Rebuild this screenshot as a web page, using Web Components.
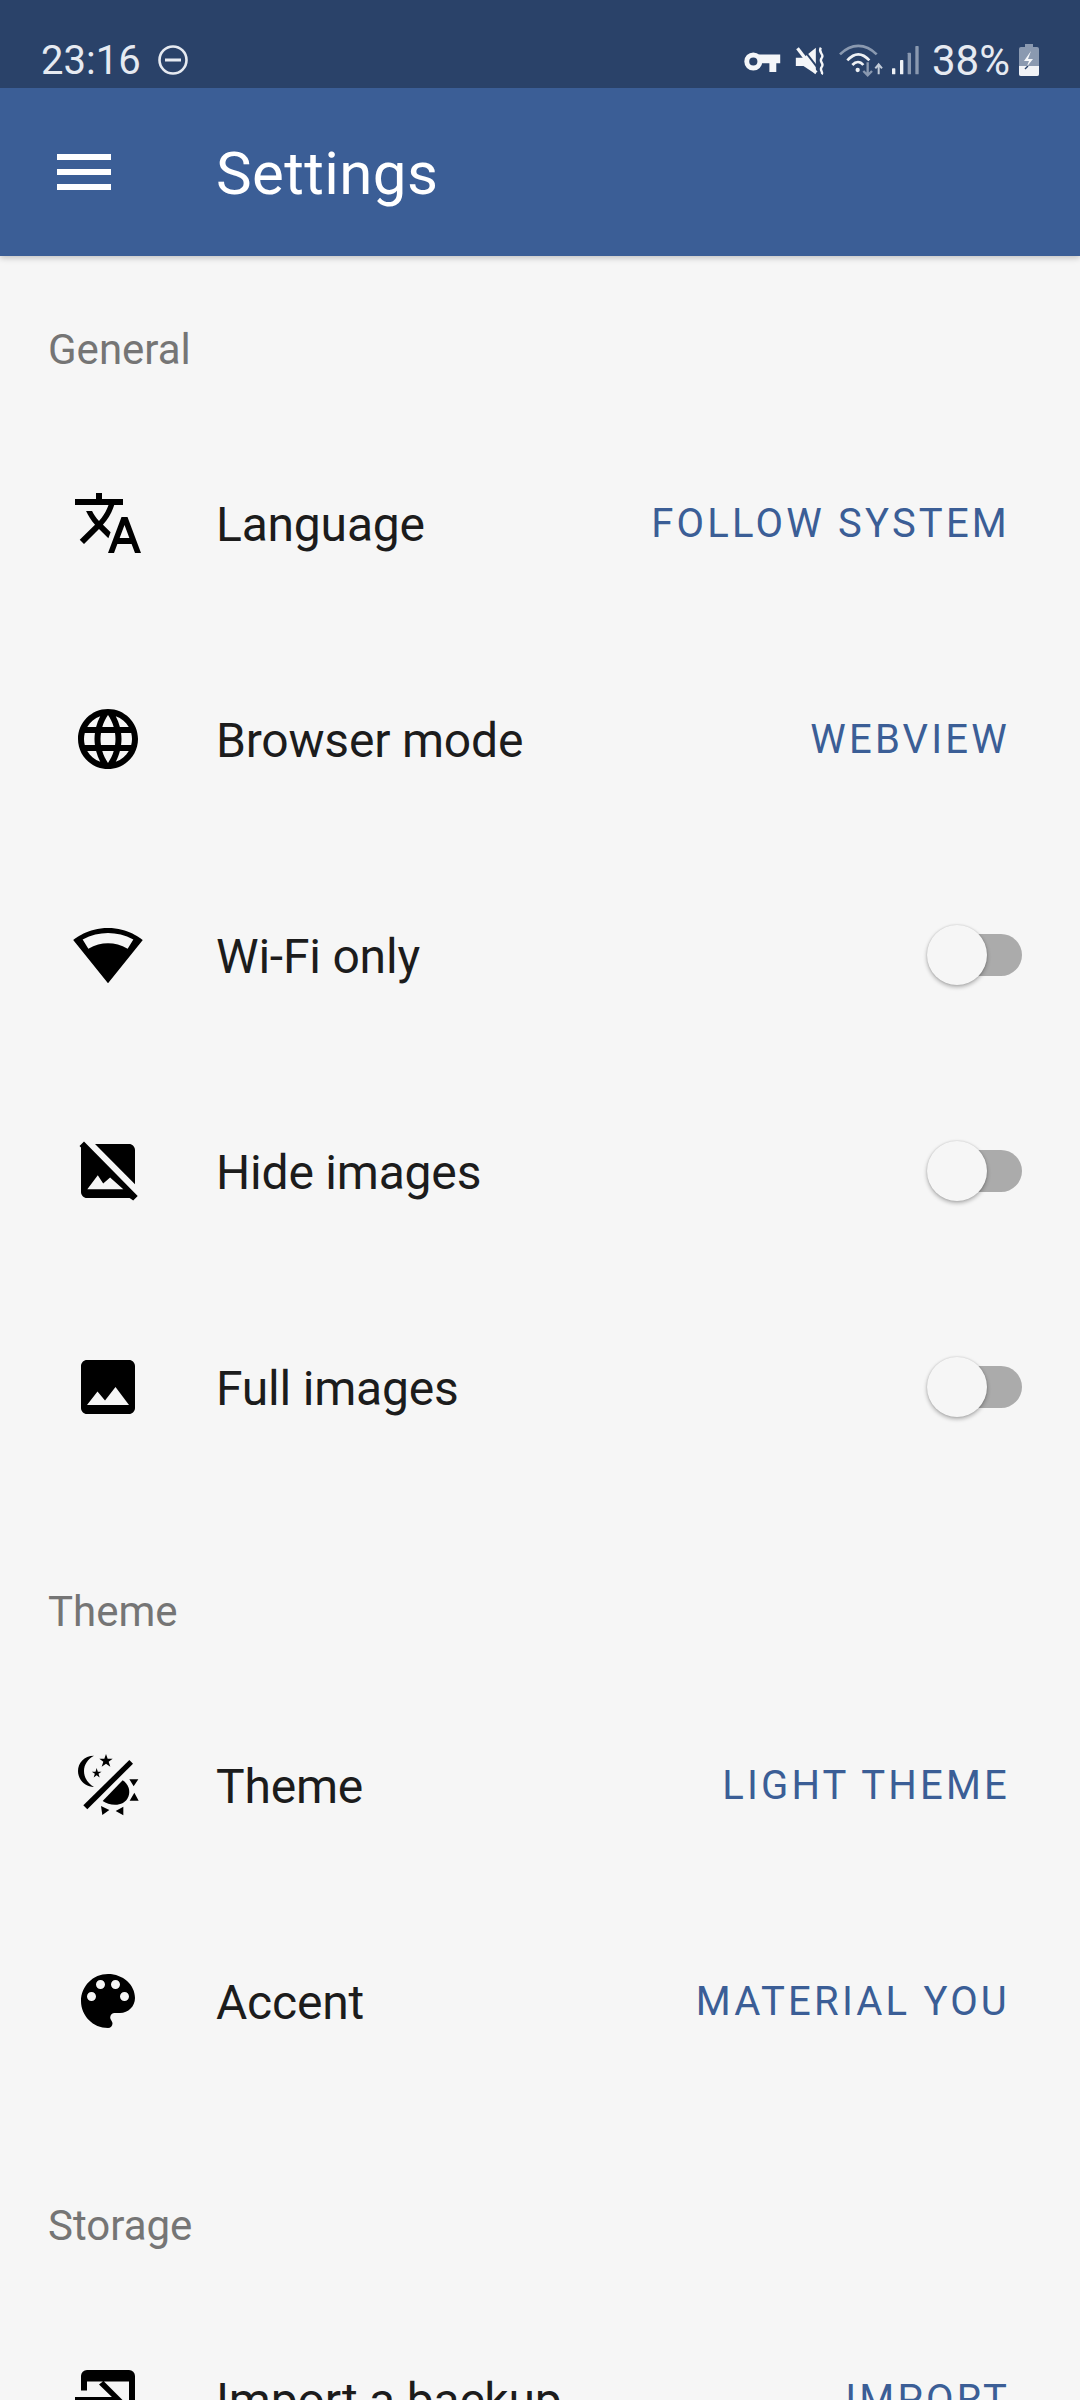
<!DOCTYPE html>
<html>
<head>
<meta charset="utf-8">
<title>Settings</title>
<style>
html, body { margin: 0; height: 2400px; overflow: hidden; background: #f6f6f6; }
body { font-family: Roboto, "Noto Sans", sans-serif; }
svg { display: block; }
</style>
</head>
<body>
<settings-page>
  <status-bar slot="top"></status-bar>
  <app-bar slot="top">Settings</app-bar>

  <settings-section heading="General">
    <settings-row>
      <svg slot="icon" viewBox="0 0 24 24" width="72" height="72"><path d="M12.87 15.07l-2.54-2.51.03-.03c1.74-1.94 2.98-4.17 3.71-6.53H17V4h-7V2H8v2H1v2h11.17C11.5 7.92 10.44 9.75 9 11.35 8.07 10.32 7.3 9.19 6.69 8h-2c.73 1.63 1.73 3.17 2.98 4.56l-5.09 5.02L4 19l5-5 3.11 3.11.76-2.04zM18.5 10h-2L12 22h2l1.12-3h4.75L21 22h2l-4.5-12zm-2.62 7l1.62-4.33L19.12 17h-3.24z"/></svg>
      Language
      <span slot="value">FOLLOW SYSTEM</span>
    </settings-row>
    <settings-row>
      <svg slot="icon" viewBox="0 0 24 24" width="72" height="72"><path d="M11.99 2C6.47 2 2 6.48 2 12s4.47 10 9.99 10C17.52 22 22 17.52 22 12S17.52 2 11.99 2zm6.93 6h-2.95c-.32-1.25-.78-2.45-1.38-3.56 1.84.63 3.37 1.91 4.33 3.56zM12 4.04c.83 1.2 1.48 2.53 1.91 3.96h-3.82c.43-1.43 1.08-2.76 1.91-3.96zM4.26 14C4.1 13.36 4 12.69 4 12s.1-1.36.26-2h3.38c-.08.66-.14 1.32-.14 2 0 .68.06 1.34.14 2H4.26zm.82 2h2.95c.32 1.25.78 2.45 1.38 3.56-1.84-.63-3.37-1.9-4.33-3.56zm2.95-8H5.08c.96-1.66 2.49-2.93 4.33-3.56C8.81 5.55 8.35 6.75 8.03 8zM12 19.96c-.83-1.2-1.48-2.53-1.91-3.96h3.82c-.43 1.43-1.08 2.76-1.91 3.96zM14.34 14H9.66c-.09-.66-.16-1.32-.16-2 0-.68.07-1.35.16-2h4.68c.09.65.16 1.32.16 2 0 .68-.07 1.34-.16 2zm.25 5.56c.6-1.11 1.06-2.31 1.38-3.56h2.95c-.96 1.65-2.49 2.93-4.33 3.56zM16.36 14c.08-.66.14-1.32.14-2 0-.68-.06-1.34-.14-2h3.38c.16.64.26 1.31.26 2s-.1 1.36-.26 2h-3.38z"/></svg>
      Browser mode
      <span slot="value">WEBVIEW</span>
    </settings-row>
    <settings-row>
      <svg slot="icon" viewBox="0 0 24 24" width="72" height="72"><path fill-rule="evenodd" d="M12 21.4L23.6 7C23.15 6.66 18.7 3 12 3S.85 6.66.4 7zM3.55 6.8Q12 2.6 20.45 6.8L18.55 9.9Q12 6.3 5.45 9.9z"/></svg>
      Wi-Fi only
      <toggle-switch slot="value"></toggle-switch>
    </settings-row>
    <settings-row>
      <svg slot="icon" viewBox="0 0 24 24" width="72" height="72"><path d="M7.67 3H19c1.1 0 2 .9 2 2v11.4zM4 2.2l17.9 18.1-1.5 1.5-1.2-.8H5c-1.1 0-2-.9-2-2V4.2l-.5-.5zM5.1 18.1h12L12.7 14.2l-2.3 2-1.8-2.8z"/></svg>
      Hide images
      <toggle-switch slot="value"></toggle-switch>
    </settings-row>
    <settings-row>
      <svg slot="icon" viewBox="0 0 24 24" width="72" height="72"><path d="M21 19V5c0-1.1-.9-2-2-2H5c-1.1 0-2 .9-2 2v14c0 1.1.9 2 2 2h14c1.1 0 2-.9 2-2zM8.5 13.5l2.5 3.01L14.5 12l4.5 6H5l3.5-4.5z"/></svg>
      Full images
      <toggle-switch slot="value"></toggle-switch>
    </settings-row>
  </settings-section>

  <settings-section heading="Theme">
    <settings-row>
      <svg slot="icon" viewBox="6 -6 216 216" width="72" height="72">
        <path d="M72 14C42 14 24 36 24 60C24 86 46 108 72 108C54 98 42 80 42 60C42 40 54 24 72 14z"/>
        <path d="M108 9l5 14h15l-12 9 5 15-13-9-13 9 5-15-12-9h15z"/>
        <path d="M80 51l3.500 11h11l-9 6.500 3.500 11-9-6.500-9 6.500 3.500-11-9-6.500h11z"/>
        <path d="M178 27l11 11L52 175 40 163z"/>
        <path d="M158 88C176 100 182 120 175 137C168 154 152 161 135 161C121 161 108 157 98 150z"/>
        <path d="M178 85h27l-14 21zM193 125l13 24h-27zM93 165l25 12-21 15zM160 167v26l-23-13z"/>
      </svg>
      Theme
      <span slot="value">LIGHT THEME</span>
    </settings-row>
    <settings-row>
      <svg slot="icon" viewBox="0 0 24 24" width="72" height="72"><path d="M12 3c-4.97 0-9 4.03-9 9s4.03 9 9 9c.83 0 1.5-.67 1.5-1.5 0-.39-.15-.74-.39-1.01-.23-.26-.38-.61-.38-.99 0-.83.67-1.5 1.5-1.5H16c2.76 0 5-2.24 5-5 0-4.42-4.03-8-9-8zm-5.500 9c-.83 0-1.500-.67-1.500-1.500S5.670 9 6.500 9 8 9.670 8 10.500 7.330 12 6.500 12zm3-4C8.670 8 8 7.330 8 6.500S8.670 5 9.500 5s1.500.67 1.500 1.500S10.330 8 9.500 8zm5 0c-.83 0-1.500-.67-1.500-1.500S13.670 5 14.500 5s1.500.67 1.500 1.500S15.330 8 14.500 8zm3 4c-.83 0-1.500-.67-1.500-1.500S16.670 9 17.500 9s1.500.67 1.500 1.500-.67 1.500-1.500 1.500z"/></svg>
      Accent
      <span slot="value">MATERIAL YOU</span>
    </settings-row>
  </settings-section>

  <settings-section heading="Storage">
    <settings-row>
      <svg slot="icon" viewBox="0 0 24 24" width="72" height="72"><path d="M3 9.200V4.330a2 2 0 0 1 2-2h14a2 2 0 0 1 2 2V24h-2V6.200H5v3zM1 11.300h12.300L9 7.200l1.500-1.200 6.500 6.500-5 5H1z"/></svg>
      Import a backup
      <span slot="value">IMPORT</span>
    </settings-row>
  </settings-section>
</settings-page>

<script>
class SettingsPage extends HTMLElement {
    constructor() {
        super();
        this.attachShadow({mode: 'open'}).innerHTML = `
            <style>
            :host { display: block; width: 1080px; height: 2400px; overflow: hidden; background: #f6f6f6; }
            header { position: relative; z-index: 1; box-shadow: 0 2px 6px rgba(0, 0, 0, .22); }
            </style>
            <header><slot name="top"></slot></header>
            <slot></slot>
        `;
    }
}

class StatusBar extends HTMLElement {
    constructor() {
        super();
        this.attachShadow({mode: 'open'}).innerHTML = `
            <style>
            :host { display: flex; align-items: center; height: 88px; box-sizing: border-box; padding: 32px 41px 0 41px;
                background: #2a4269; color: #e6eaf1; font-size: 40px; }
            svg { display: block; flex: none; }
            .left, .right { display: flex; align-items: center; }
            .right { margin-left: auto; }
            .dnd { margin-left: 17px; }
            .pct { margin-left: 11px; margin-right: 9px; font-size: 42px; }
            </style>
            <div class="left">
                <span>23:16</span>
                <svg class="dnd" width="30" height="30" viewBox="0 0 30 30"><circle cx="15" cy="15" r="13.500" fill="none" stroke="#e6eaf1" stroke-width="2.600"/><rect x="7" y="13.500" width="16" height="3" fill="#e6eaf1"/></svg>
            </div>
            <div class="right">
                <svg style="margin-top:3px" width="37" height="21" viewBox="8 33 112 64" fill="#f4f6f9"><circle cx="36" cy="65" r="20" fill="none" stroke="#f4f6f9" stroke-width="15"/><path d="M52 44h66v26h-12v27H85V70H52z"/></svg>
                <svg style="margin-left:13px;margin-top:2px" width="32" height="30" viewBox="160 20 95 90">
                    <path fill="#f4f6f9" d="M165 55H188L225 25V105L188 80H165z"/>
                    <path d="M180 20L234 90" stroke="#2a4269" stroke-width="6"/>
                    <path d="M170 27L226 100" stroke="#f4f6f9" stroke-width="10"/>
                    <path d="M240 25C230 40 252 45 243 55C232 68 252 72 243 82C234 92 248 97 243 105" fill="none" stroke="#f4f6f9" stroke-width="7"/>
                </svg>
                <svg style="margin-left:12px" width="45" height="34" viewBox="290 8 135 102">
                    <path d="M296 42C330 8 372 8 406 42" fill="none" stroke="#8a99b0" stroke-width="8"/>
                    <path d="M318 60C340 36 362 36 384 60" fill="none" stroke="#eef1f5" stroke-width="8"/>
                    <path d="M333 74C344 62 356 62 366 74" fill="none" stroke="#eef1f5" stroke-width="8"/>
                    <circle cx="349" cy="89" r="6.500" fill="#eef1f5"/>
                    <path d="M379 66v36M366 92l13 13 13-13" fill="none" stroke="#8a99b0" stroke-width="7"/>
                    <path d="M412 102V74M402 84l10-12 10 12" fill="none" stroke="#c3ccd8" stroke-width="6"/>
                </svg>
                <svg style="margin-left:8px" width="30" height="30" viewBox="450 15 90 90">
                    <rect x="453" y="85" width="10" height="18" rx="2" fill="#eef1f5"/>
                    <rect x="477" y="60" width="10" height="43" rx="2" fill="#eef1f5"/>
                    <rect x="500" y="38" width="10" height="65" rx="2" fill="#8a99b0"/>
                    <rect x="523" y="18" width="10" height="85" rx="2" fill="#8a99b0"/>
                </svg>
                <span class="pct">38%</span>
                <svg width="20" height="32" viewBox="0 0 20 32">
                    <path d="M6 0h8v3h4a2 2 0 0 1 2 2v10H0V5a2 2 0 0 1 2-2h4z" fill="#8a99b0"/>
                    <path d="M0 15h20v15a2 2 0 0 1-2 2H2a2 2 0 0 1-2-2z" fill="#8a99b0"/>
                    <path d="M0 22h20v8a2 2 0 0 1-2 2H2a2 2 0 0 1-2-2z" fill="#f0f2f6"/>
                    <path d="M12 7L5 17h5l-2 5-2 3 8-10H9z" fill="#f4f6f9"/>
                    <path d="M9 22l-3 3" stroke="#2a4269" stroke-width="1.500"/>
                </svg>
            </div>
        `;
    }
}

class AppBar extends HTMLElement {
    constructor() {
        super();
        this.attachShadow({mode: 'open'}).innerHTML = `
            <style>
            :host { display: flex; align-items: center; height: 168px; padding-left: 57px;
                background: #3b5e96; color: #fff; font-size: 60px; }
            .menu { display: flex; flex-direction: column; gap: 9px; width: 54px; margin-right: 105px; }
            .menu i { display: block; height: 6px; background: #fff; }
            .title { margin-top: 2px; letter-spacing: .4px; }
            </style>
            <div class="menu"><i></i><i></i><i></i></div>
            <div class="title"><slot></slot></div>
        `;
    }
}

class SettingsSection extends HTMLElement {
    constructor() {
        super();
        this.attachShadow({mode: 'open'}).innerHTML = `
            <style>
            :host { display: block; padding-top: 72px; }
            :host(:first-of-type) { padding-top: 49px; }
            h2 { margin: 0 0 22px; padding-left: 48px; height: 88px; line-height: 89px;
                font-size: 42px; font-weight: 400; color: #757575; }
            </style>
            <h2></h2>
            <slot></slot>
        `;
        this.shadowRoot.querySelector('h2').textContent = this.getAttribute('heading');
    }
}

class SettingsRow extends HTMLElement {
    constructor() {
        super();
        this.attachShadow({mode: 'open'}).innerHTML = `
            <style>
            :host { display: flex; align-items: center; height: 216px; padding: 0 72px;
                font-size: 48px; color: #1c1c1c; }
            .icon { width: 72px; height: 72px; margin-right: 72px; flex: none; }
            .label { flex: 1; margin-top: 2px; letter-spacing: -.2px; }
            ::slotted(span) { color: #3b5e96; font-size: 40px; letter-spacing: 3.200px; margin-right: -2px; }
            </style>
            <div class="icon"><slot name="icon"></slot></div>
            <div class="label"><slot></slot></div>
            <slot name="value"></slot>
        `;
    }
}

class ToggleSwitch extends HTMLElement {
    constructor() {
        super();
        this.attachShadow({mode: 'open'}).innerHTML = `
            <style>
            :host { display: block; position: relative; width: 95px; height: 60px; margin: 0 -14px 0 0; }
            .track { position: absolute; left: 6px; right: 0; top: 9px; height: 42px; border-radius: 21px; background: #ababab; }
            .thumb { position: absolute; left: 0; top: 0; width: 60px; height: 60px; border-radius: 50%;
                background: #f6f6f6; box-shadow: 0 2px 4px rgba(0, 0, 0, .3), 0 0 2px rgba(0, 0, 0, .15); }
            </style>
            <div class="track"></div>
            <div class="thumb"></div>
        `;
    }
}

customElements.define('settings-page', SettingsPage);
customElements.define('status-bar', StatusBar);
customElements.define('app-bar', AppBar);
customElements.define('settings-section', SettingsSection);
customElements.define('settings-row', SettingsRow);
customElements.define('toggle-switch', ToggleSwitch);
</script>
</body>
</html>
